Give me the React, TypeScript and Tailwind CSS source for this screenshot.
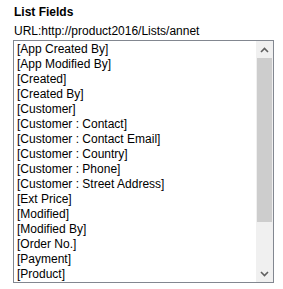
import React from "react";

const fields = [
  "[App Created By]",
  "[App Modified By]",
  "[Created]",
  "[Created By]",
  "[Customer]",
  "[Customer : Contact]",
  "[Customer : Contact Email]",
  "[Customer : Country]",
  "[Customer : Phone]",
  "[Customer : Street Address]",
  "[Ext Price]",
  "[Modified]",
  "[Modified By]",
  "[Order No.]",
  "[Payment]",
  "[Product]",
];

export default function App() {
  return (
    <div className="w-[283px] h-[289px] bg-white pl-[13px] pt-[5px] text-black font-['Liberation_Sans',Arial,sans-serif] text-[12px] overflow-hidden">
      <div className="font-bold leading-[15px] pl-px">List Fields</div>
      <div className="leading-[15px] mt-[4px] pl-px">URL:http://product2016/Lists/annet</div>
      <div className="mt-px w-[261px] h-[243px] border border-[#828790] flex">
        <div className="flex-1 pl-[3px] pt-px overflow-hidden">
          {fields.map((f) => (
            <div key={f} className="leading-[15px] whitespace-nowrap">
              {f}
            </div>
          ))}
        </div>
        <div className="w-[17px] bg-[#f0f0f0] flex flex-col">
          <div className="h-[17px] flex items-center justify-center">
            <svg width="9" height="6" viewBox="0 0 9 6">
              <path d="M1 5 L4.5 1.5 L8 5" stroke="#606060" strokeWidth="1.6" fill="none" />
            </svg>
          </div>
          <div className="h-[164px] mx-px bg-[#cdcdcd]" />
          <div className="flex-1" />
          <div className="h-[17px] flex items-center justify-center">
            <svg width="9" height="6" viewBox="0 0 9 6">
              <path d="M1 1 L4.5 4.5 L8 1" stroke="#606060" strokeWidth="1.6" fill="none" />
            </svg>
          </div>
        </div>
      </div>
    </div>
  );
}
